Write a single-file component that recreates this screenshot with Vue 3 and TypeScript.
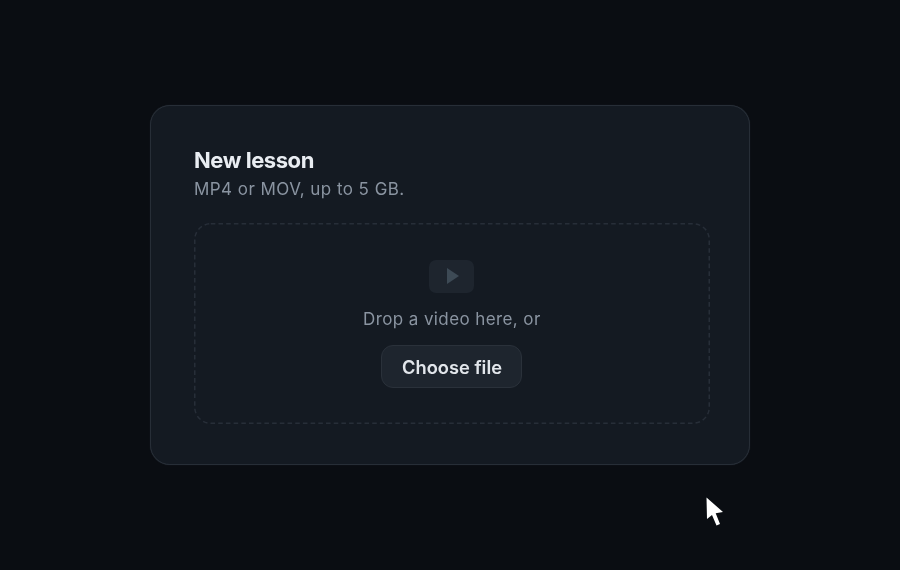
<script setup lang="ts">
const title: string = 'New lesson'
</script>

<template>
  <main class="page">
    <section class="card">
      <h1 class="title">{{ title }}</h1>
      <p class="sub">MP4 or MOV, up to 5 GB.</p>
      <div class="drop">
        <svg class="dash" width="516" height="201" viewBox="0 0 516 201">
          <rect x="0.75" y="0.75" width="514.5" height="199.5" rx="16" ry="16" fill="none" stroke="#272e38" stroke-width="1.5" stroke-dasharray="4.6 3.1" />
        </svg>
        <div class="thumb">
          <svg class="play" width="12" height="16" viewBox="0 0 12 16"><path d="M0 0 L12 8 L0 16 Z" fill="#3d4a55" /></svg>
        </div>
        <p class="hint">Drop a video here, or</p>
        <button class="btn" type="button"><span class="btn-label">Choose file</span></button>
      </div>
    </section>
    <svg class="cursor" width="22" height="32" viewBox="0 0 22 32">
      <path d="M1.5 0.5 L18 15 L10.7 16.2 L15 27 L11.5 28.5 L7 18 L2 22 Z" fill="#fff" />
    </svg>
  </main>
</template>

<style>
html, body { margin: 0; background: #0a0d12; }
</style>

<style scoped>
.page {
  position: relative;
  width: 900px;
  height: 570px;
  display: flex;
  align-items: center;
  justify-content: center;
  background: #0a0d12;
  font-family: Inter, "Noto Sans", sans-serif;
  overflow: hidden;
}
.card {
  box-sizing: border-box;
  width: 600px;
  height: 360px;
  padding: 40px 40px 40px 42.5px;
  background: #141a22;
  border: 1px solid #272e37;
  border-radius: 20px;
  box-shadow: 0 0 1px #272e37;
  display: flex;
  flex-direction: column;
}
.title {
  margin: 0;
  font-size: 22px;
  line-height: 28px;
  font-weight: 700;
  letter-spacing: -0.45px;
  color: #e9edf2;
  will-change: transform;
}
.sub {
  margin: 3px 0 0;
  font-size: 17px;
  line-height: 24px;
  letter-spacing: 0.45px;
  color: #8a94a1;
  will-change: transform;
}
.drop {
  position: relative;
  box-sizing: border-box;
  margin-top: 22px;
  width: 516px;
  height: 201px;
  display: flex;
  flex-direction: column;
  align-items: center;
  padding-top: 36.5px;
}
.dash {
  position: absolute;
  left: 0;
  top: 0;
}
.thumb {
  width: 45px;
  height: 33px;
  border-radius: 7px;
  background: #1e252e;
  display: flex;
  align-items: center;
  justify-content: center;
}
.play {
  margin-left: 2px;
}
.hint {
  margin: 14px 0 0;
  font-size: 17px;
  line-height: 24px;
  letter-spacing: 0.4px;
  color: #8a94a1;
  will-change: transform;
}
.btn {
  box-sizing: border-box;
  margin-top: 14.5px;
  width: 141px;
  height: 43px;
  border-radius: 12px;
  border: 1px solid #2a313a;
  background: #1e252e;
  color: #e2e6eb;
  font-family: inherit;
  font-size: 18.3px;
  font-weight: 600;
  padding: 0;
}
.btn-label {
  display: inline-block;
  will-change: transform;
}
.cursor {
  position: absolute;
  left: 705px;
  top: 497px;
}
</style>
